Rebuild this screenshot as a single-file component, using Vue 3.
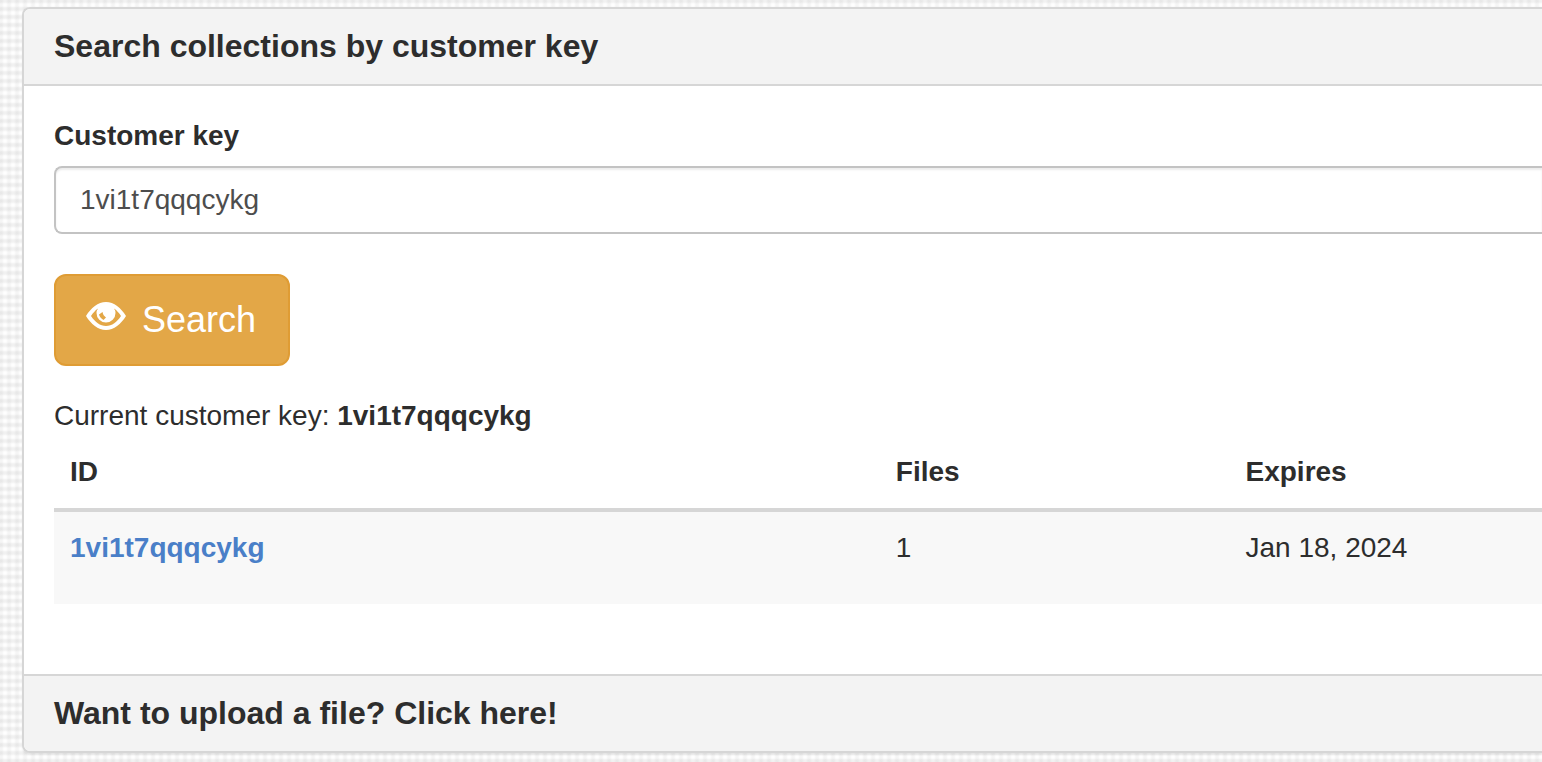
<script setup>
import { ref } from 'vue'

const customerKey = ref('1vi1t7qqqcykg')
const currentKey = ref('1vi1t7qqqcykg')
const collections = ref([{ id: '1vi1t7qqqcykg', files: 1, expires: 'Jan 18, 2024' }])

function search() {
  currentKey.value = customerKey.value
}
</script>

<template>
  <main class="page">
    <section class="panel">
      <header class="panel-heading">
        <h1 class="panel-title">Search collections by customer key</h1>
      </header>
      <div class="panel-body">
        <form @submit.prevent="search">
          <label class="label" for="customer-key">Customer key</label>
          <input id="customer-key" v-model="customerKey" class="field" type="text" />
          <button class="button" type="submit">
            <svg class="eye" viewBox="0 0 40 28" aria-hidden="true">
              <path
                fill="currentColor"
                fill-rule="evenodd"
                d="M0 14C5 6 12 0 20 0s15 6 20 14c-5 8-12 14-20 14S5 22 0 14zM5 14c4 6 9 10 15 10S31 20 35 14c-2-3-4-5.500-7-7.500q1.500 2 1.500 4.500a9.500 9.500 0 0 1-19 0q0-2.500 1.500-4.500C9 8.500 7 11 5 14zM16.500 10l-3.500 2.500c.5 2 2 4 4.500 5.500l2.500-2.500c-2-1.500-3-3-3.500-5.500z"
              />
            </svg>
            <span>Search</span>
          </button>
        </form>
        <p class="current">Current customer key: <strong>{{ currentKey }}</strong></p>
        <table class="table">
          <thead>
            <tr>
              <th class="col-id" scope="col">ID</th>
              <th class="col-files" scope="col">Files</th>
              <th scope="col">Expires</th>
            </tr>
          </thead>
          <tbody>
            <tr v-for="item in collections" :key="item.id">
              <td><a class="link" href="#">{{ item.id }}</a></td>
              <td>{{ item.files }}</td>
              <td>{{ item.expires }}</td>
            </tr>
          </tbody>
        </table>
      </div>
      <footer class="panel-footer">
        <h2 class="panel-title"><a class="upload" href="#">Want to upload a file? Click here!</a></h2>
      </footer>
    </section>
  </main>
</template>

<style>
body {
  margin: 0;
  background-color: #fefefe;
  background-image:
    repeating-linear-gradient(90deg, rgba(0, 0, 0, 0.035) 0, rgba(0, 0, 0, 0.035) 2px, rgba(0, 0, 0, 0) 4px, rgba(0, 0, 0, 0) 6px, rgba(0, 0, 0, 0.035) 8px),
    repeating-linear-gradient(180deg, rgba(0, 0, 0, 0.05) 0, rgba(0, 0, 0, 0.05) 2px, rgba(0, 0, 0, 0) 4px, rgba(0, 0, 0, 0) 6px, rgba(0, 0, 0, 0.05) 8px);
}
</style>

<style scoped>
.page {
  padding: 7px 0 9px 22px;
  color: #2d2d2d;
  font-family: "Liberation Sans", Arial, sans-serif;
  font-size: 28px;
  line-height: 40px;
}

.panel {
  border: 2px solid #d6d6d6;
  border-right: 0;
  border-radius: 8px 0 0 8px;
  background: #fff;
  box-shadow: 0 2px 2px rgba(0, 0, 0, 0.05);
  overflow: hidden;
}

.panel-heading,
.panel-footer {
  padding: 20px 30px;
  background: #f3f3f3;
}

.panel-heading {
  border-bottom: 2px solid #d6d6d6;
}

.panel-footer {
  border-top: 2px solid #d6d6d6;
}

.panel-title {
  margin: 0;
  font-size: 32px;
  font-weight: 700;
  line-height: 35px;
}

.panel-body {
  padding: 30px 0 70px 30px;
}

.label {
  display: block;
  margin-bottom: 10px;
  font-weight: 700;
}

.field {
  display: block;
  box-sizing: border-box;
  width: 100%;
  height: 68px;
  padding: 12px 24px;
  border: 2px solid #c3c3c3;
  border-right: 0;
  border-radius: 8px 0 0 8px;
  background: #fff;
  box-shadow: inset 0 2px 2px rgba(0, 0, 0, 0.08);
  color: #4d4d4d;
  font: inherit;
}

.button {
  display: flex;
  align-items: center;
  gap: 16px;
  margin-top: 40px;
  padding: 20px 32px 20px 30px;
  border: 2px solid #df9c34;
  border-radius: 12px;
  background: #e3a747;
  color: #fff;
  font-family: inherit;
  font-size: 36px;
  line-height: 48px;
}

.eye {
  width: 40px;
  height: 28px;
  margin-bottom: 8px;
}

.current {
  margin: 30px 0 0;
}

.table {
  width: 100%;
  border-collapse: separate;
  border-spacing: 0;
  table-layout: fixed;
}

.col-id {
  width: 55.5%;
}

.col-files {
  width: 23.5%;
}

th,
td {
  box-sizing: border-box;
  padding: 16px;
  text-align: left;
  vertical-align: top;
}

th {
  border-bottom: 4px solid #d6d6d6;
}

td {
  padding-bottom: 36px;
  background: #f8f8f8;
}

.link {
  color: #4a7fc8;
  font-weight: 700;
  text-decoration: none;
}

.upload {
  color: inherit;
  text-decoration: none;
}
</style>
